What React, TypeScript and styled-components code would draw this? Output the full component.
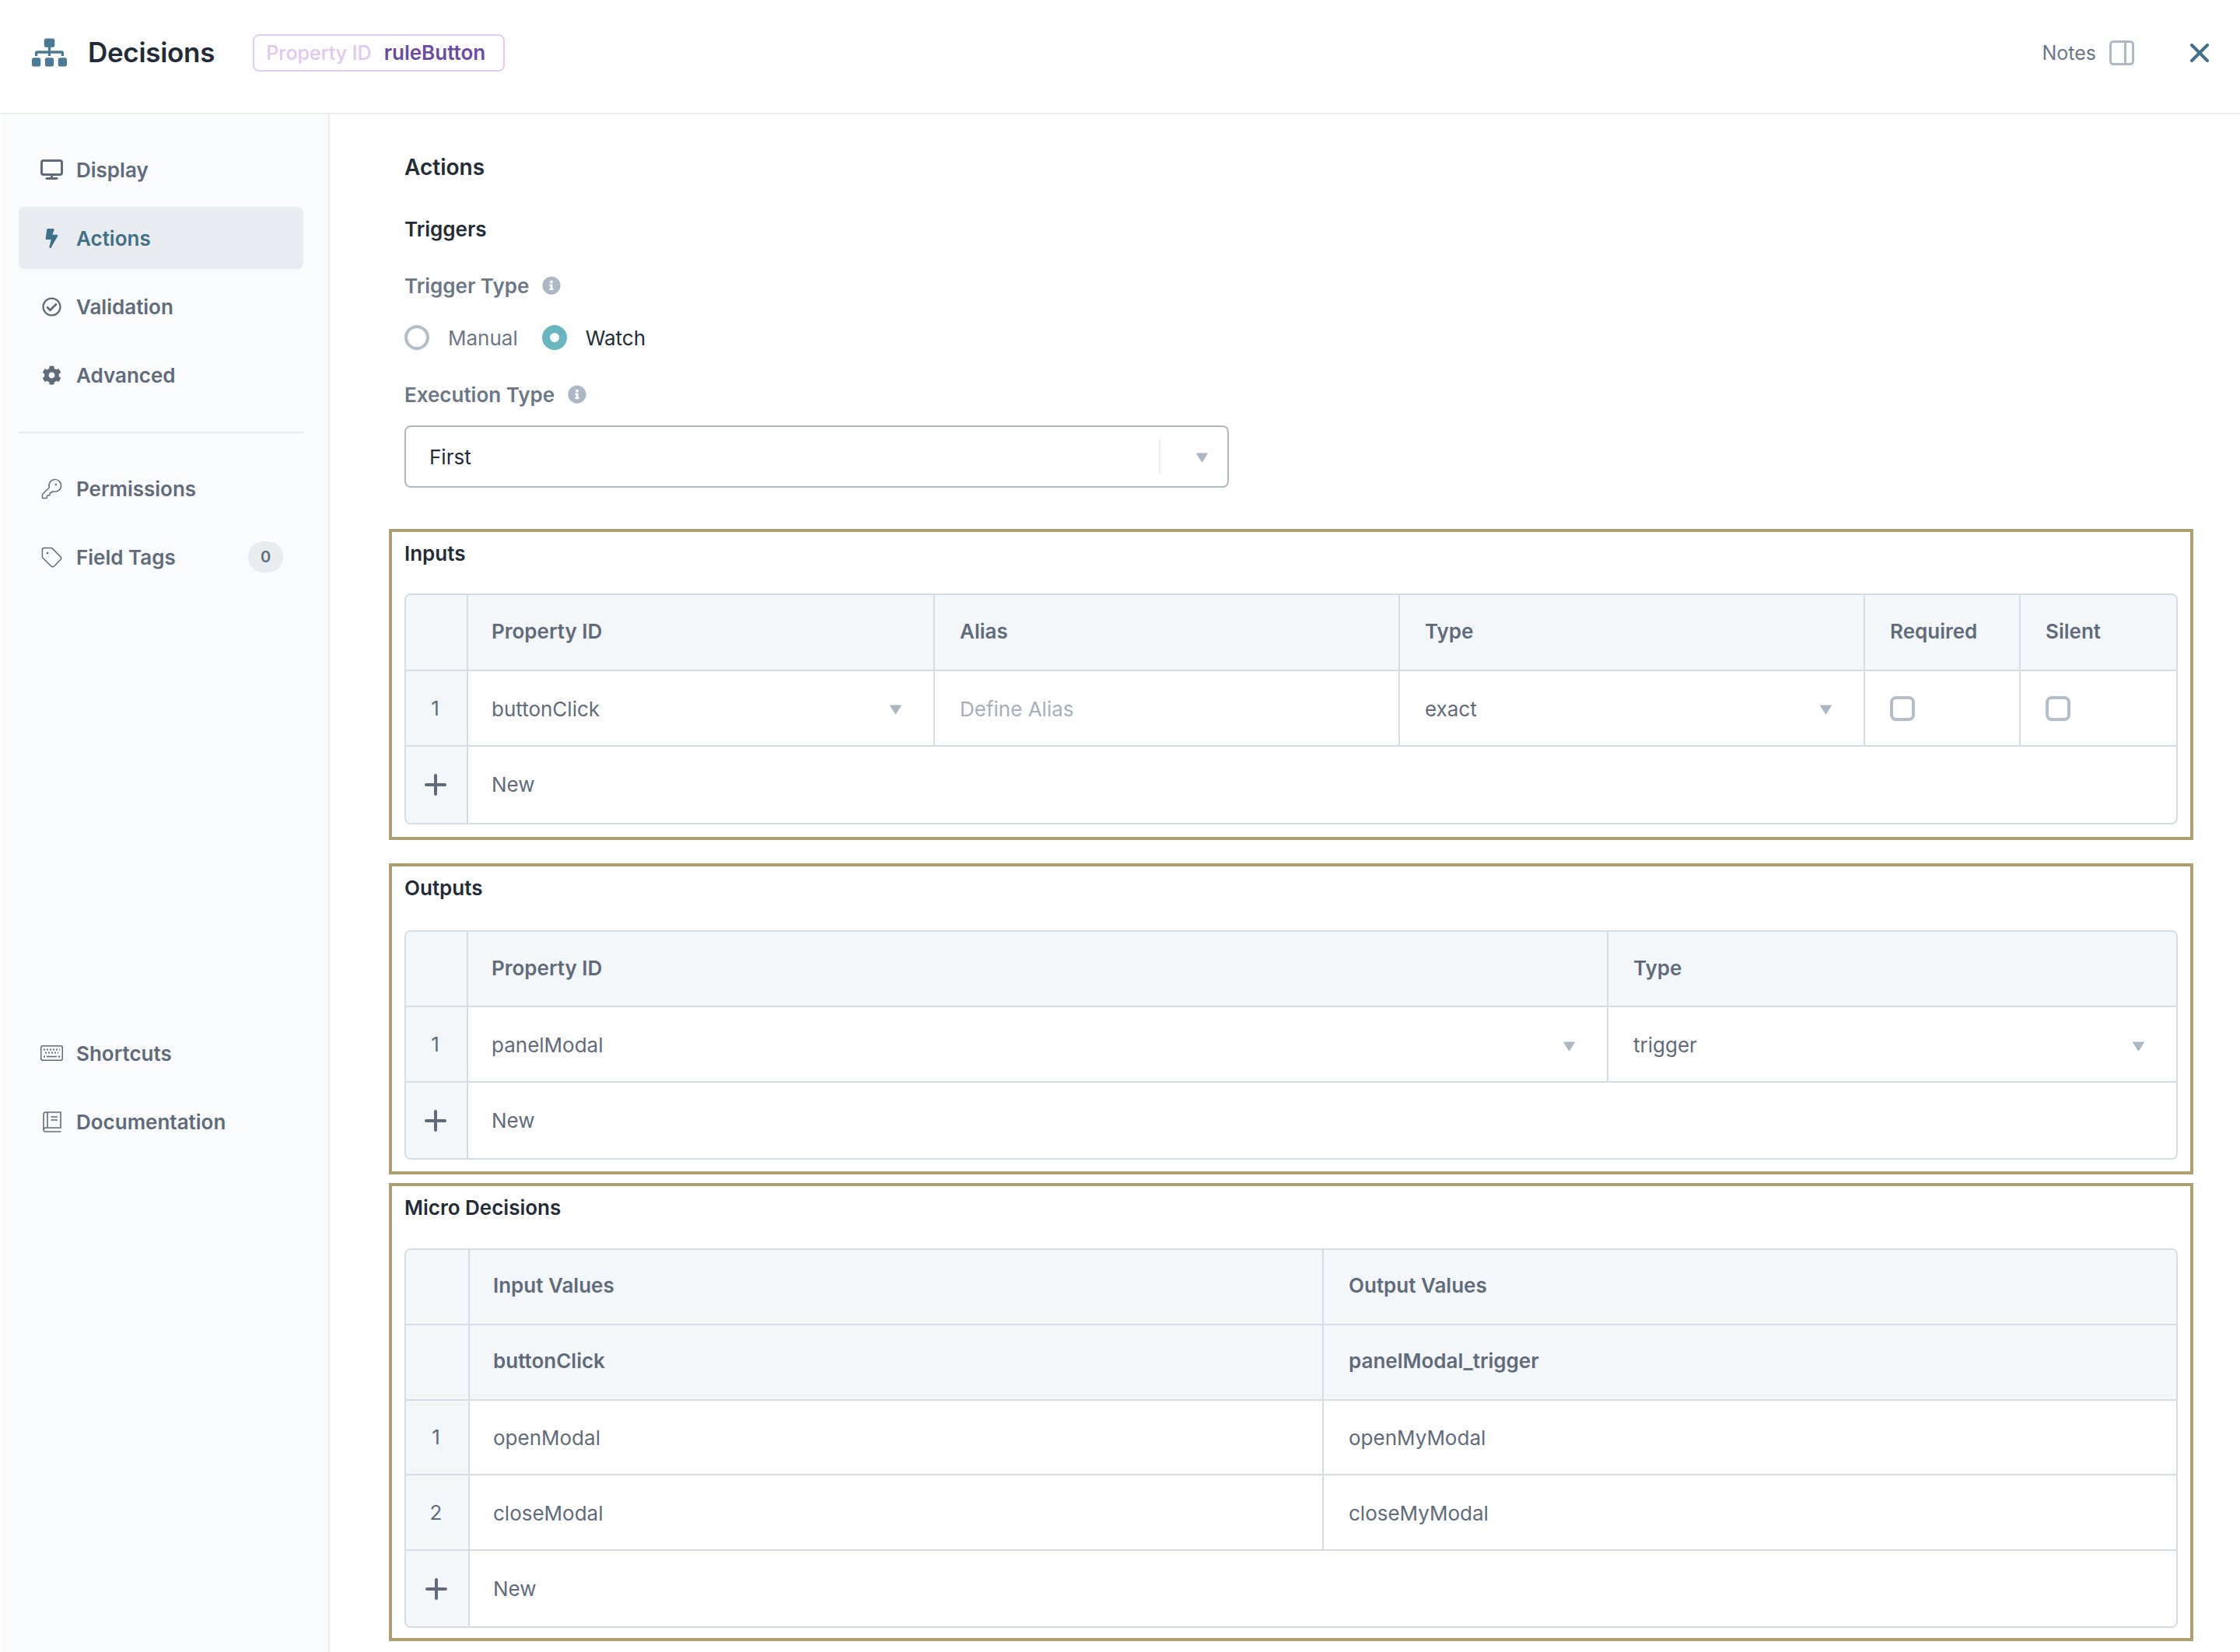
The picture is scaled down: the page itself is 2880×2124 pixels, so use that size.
import React from 'react';
import { KeyRound, Tag } from 'lucide-react';
import { FaBolt, FaCog, FaInfoCircle, FaRegCheckCircle, FaSitemap } from 'react-icons/fa';
import styled, { createGlobalStyle } from 'styled-components';

const GlobalStyle = createGlobalStyle`
  html, body {
    margin: 0;
    padding: 0;
    background: #fff;
  }
  body {
    font-family: Inter, "Liberation Sans", sans-serif;
    color: #222b38;
  }
  * { box-sizing: border-box; }
`;

const DesktopIcon = () => (
  <svg width="29" height="26" viewBox="0 0 29 26" fill="none" stroke="currentColor">
    <rect x="1.5" y="1.5" width="26" height="18" rx="2.5" strokeWidth="3" />
    <path d="M14.5 20v4" strokeWidth="3" />
    <path d="M8 24.5h13" strokeWidth="3" strokeLinecap="round" />
  </svg>
);

const KeyboardIcon = () => (
  <svg width="29" height="20" viewBox="0 0 29 20" fill="none" stroke="currentColor">
    <rect x="0.75" y="0.75" width="27.5" height="18.5" rx="2" strokeWidth="1.5" />
    <path d="M4 5.5h21M6 9.5h17M4 9.5h0" strokeWidth="2" strokeDasharray="2 2" />
    <path d="M8 14.5h13" strokeWidth="1.6" />
    <path d="M4 14.5h2M23 14.5h2" strokeWidth="2" />
  </svg>
);

const BookIcon = () => (
  <svg width="24" height="27" viewBox="0 0 24 27" fill="none" stroke="currentColor" strokeWidth="1.6">
    <path d="M23 21H4a3 3 0 0 0-3 3v-20a3 3 0 0 1 3-3h19z" />
    <path d="M1 24a2.4 2.4 0 0 0 3 2h19.4" />
    <path d="M6 1v20" />
    <path d="M10.5 7h8.5M10.5 11h8.5" />
  </svg>
);

const Caret = () => (
  <CaretSvg width="17" height="13" viewBox="0 0 17 13">
    <path d="M1.5 1h14L8.5 12z" fill="#adb6c1" stroke="#adb6c1" strokeLinejoin="round" />
  </CaretSvg>
);

const Plus = () => (
  <svg width="28" height="28" viewBox="0 0 28 28" stroke="#5f6b7b" strokeWidth="4" strokeLinecap="round">
    <path d="M14 2v24M2 14h24" />
  </svg>
);

const App = () => (
  <Page>
    <GlobalStyle />
    <Header>
      <HeaderLeft>
        <LogoIcon><FaSitemap size={45} /></LogoIcon>
        <Title>Decisions</Title>
        <IdBadge>
          <IdLabel>Property ID</IdLabel>
          <IdValue>ruleButton</IdValue>
        </IdBadge>
      </HeaderLeft>
      <HeaderRight>
        <NotesText>Notes</NotesText>
        <svg width="32" height="32" viewBox="0 0 32 32" fill="none" stroke="#aeb9c5" strokeWidth="3">
          <rect x="1.5" y="1.5" width="29" height="29" rx="4" />
          <path d="M20.5 2v28" />
        </svg>
        <CloseButton>
          <svg width="24" height="24" viewBox="0 0 24 24" stroke="#40708a" strokeWidth="4" strokeLinecap="round">
            <path d="M2 2l20 20M22 2L2 22" />
          </svg>
        </CloseButton>
      </HeaderRight>
    </Header>

    <Body>
      <Sidebar>
        <NavItem><NavIcon><DesktopIcon /></NavIcon>Display</NavItem>
        <NavItem $active><NavIcon><FaBolt size={25} /></NavIcon>Actions</NavItem>
        <NavItem><NavIcon><FaRegCheckCircle size={25} /></NavIcon>Validation</NavItem>
        <NavItem><NavIcon><FaCog size={25} /></NavIcon>Advanced</NavItem>
        <Divider />
        <NavItem><NavIcon><KeyRound size={29} strokeWidth={1.2} /></NavIcon>Permissions</NavItem>
        <NavItem>
          <NavIcon><Tag size={29} strokeWidth={1.2} /></NavIcon>
          Field Tags
          <CountBadge>0</CountBadge>
        </NavItem>
        <BottomGroup>
          <NavItem><NavIcon><KeyboardIcon /></NavIcon>Shortcuts</NavItem>
          <NavItem><NavIcon><BookIcon /></NavIcon>Documentation</NavItem>
        </BottomGroup>
      </Sidebar>

      <Main>
        <SectionTitle>Actions</SectionTitle>
        <SubTitle>Triggers</SubTitle>
        <FieldLabel>
          Trigger Type
          <InfoIcon><FaInfoCircle size={24} /></InfoIcon>
        </FieldLabel>
        <RadioRow>
          <Radio />
          <RadioText>Manual</RadioText>
          <Radio $on />
          <RadioText $on>Watch</RadioText>
        </RadioRow>
        <FieldLabel $top={33}>
          Execution Type
          <InfoIcon><FaInfoCircle size={24} /></InfoIcon>
        </FieldLabel>
        <Select>
          <SelectValue>First</SelectValue>
          <SelectDivider />
          <Caret />
        </Select>

        <Boxed $top={53} $height={400}>
          <BoxLabel $gap={31}>Inputs</BoxLabel>
          <Table $cols="80px 600px 598px 598px 200px 1fr" $row={97.5}>
            <HeadCell />
            <HeadCell $first>Property ID</HeadCell>
            <HeadCell>Alias</HeadCell>
            <HeadCell>Type</HeadCell>
            <HeadCell>Required</HeadCell>
            <HeadCell $end>Silent</HeadCell>

            <IndexCell>1</IndexCell>
            <Cell $first>buttonClick<Caret /></Cell>
            <Cell $muted>Define Alias</Cell>
            <Cell>exact<Caret /></Cell>
            <Cell><Checkbox /></Cell>
            <Cell $end><Checkbox /></Cell>

            <IndexCell $last><Plus /></IndexCell>
            <NewCell>New</NewCell>
          </Table>
        </Boxed>

        <Boxed $top={30} $height={400}>
          <BoxLabel $gap={34}>Outputs</BoxLabel>
          <Table $cols="80px 1466px 1fr" $row={97}>
            <HeadCell />
            <HeadCell $first>Property ID</HeadCell>
            <HeadCell $end>Type</HeadCell>

            <IndexCell>1</IndexCell>
            <Cell $first>panelModal<Caret /></Cell>
            <Cell $end>trigger<Caret /></Cell>

            <IndexCell $last><Plus /></IndexCell>
            <NewCell>New</NewCell>
          </Table>
        </Boxed>

        <Boxed $top={11} $height={589}>
          <BoxLabel $gap={32}>Micro Decisions</BoxLabel>
          <Table $cols="82px 1098px 1fr" $row={96.8}>
            <HeadCell />
            <HeadCell $first>Input Values</HeadCell>
            <HeadCell $end>Output Values</HeadCell>

            <HeadCell />
            <HeadCell $first>buttonClick</HeadCell>
            <HeadCell $end>panelModal_trigger</HeadCell>

            <IndexCell>1</IndexCell>
            <Cell $first>openModal</Cell>
            <Cell $end>openMyModal</Cell>

            <IndexCell>2</IndexCell>
            <Cell $first>closeModal</Cell>
            <Cell $end>closeMyModal</Cell>

            <IndexCell $last><Plus /></IndexCell>
            <NewCell>New</NewCell>
          </Table>
        </Boxed>
      </Main>
    </Body>
  </Page>
);

const Page = styled.div`
  width: 2880px;
  height: 2124px;
  overflow: hidden;
  display: flex;
  flex-direction: column;
  background: #fff;
`;

const Header = styled.header`
  height: 147px;
  flex: none;
  display: flex;
  align-items: center;
  justify-content: space-between;
  padding: 0 40px 10px 41px;
  border-bottom: 2px solid #eaeef0;
`;

const HeaderLeft = styled.div`
  display: flex;
  align-items: center;
`;

const LogoIcon = styled.span`
  display: flex;
  color: #4a7a96;
  margin-right: 27px;
`;

const Title = styled.h1`
  margin: -2px 49px 0 0;
  font-size: 35px;
  line-height: 44px;
  font-weight: 600;
  letter-spacing: -0.3px;
  color: #222b38;
`;

const IdBadge = styled.div`
  height: 48px;
  width: 324px;
  display: flex;
  align-items: center;
  padding: 0 15px;
  border: 2px solid #e2cdee;
  border-radius: 8px;
  font-size: 26px;
  font-weight: 600;
`;

const IdLabel = styled.span`
  color: #e0c8ee;
  font-size: 25px;
  font-weight: 500;
  margin-right: 16px;
  white-space: nowrap;
`;

const IdValue = styled.span`
  color: #6b4aa6;
`;

const HeaderRight = styled.div`
  display: flex;
  align-items: center;
`;

const NotesText = styled.span`
  font-size: 25px;
  color: #6b7787;
  margin-right: 17px;
`;

const CloseButton = styled.span`
  display: flex;
  margin-left: 72px;
`;

const CaretSvg = styled.svg`
  flex: none;
  margin-left: auto;
  margin-top: 3px;
`;

const Body = styled.div`
  flex: 1;
  display: flex;
  min-height: 0;
`;

const Sidebar = styled.nav`
  flex: none;
  width: 421px;
  margin-left: 3px;
  padding: 31px 32px 0 21px;
  background: #f9fbfc;
  border-right: 2px solid #e8ecf1;
  display: flex;
  flex-direction: column;
  gap: 8px;
`;

const NavItem = styled.div<{ $active?: boolean }>`
  height: 80px;
  flex: none;
  display: flex;
  align-items: center;
  padding: 0 24px 0 28px;
  border-radius: 8px;
  font-size: 26px;
  font-weight: 600;
  color: ${(p) => (p.$active ? '#3f7088' : '#5f6b7b')};
  background: ${(p) => (p.$active ? '#e8ecf0' : 'transparent')};
`;

const NavIcon = styled.span`
  width: 29px;
  margin-right: 17px;
  display: flex;
  align-items: center;
  justify-content: center;
  flex: none;
`;

const CountBadge = styled.span`
  margin-left: auto;
  margin-right: 2px;
  width: 45px;
  height: 40px;
  border-radius: 20px;
  background: #e8ecf0;
  display: flex;
  align-items: center;
  justify-content: center;
  font-size: 20px;
  font-weight: 600;
`;

const Divider = styled.div`
  height: 2px;
  background: #e8ecf0;
  margin: 25px 0 23px;
  flex: none;
`;

const BottomGroup = styled.div`
  margin-top: 550px;
  display: flex;
  flex-direction: column;
  gap: 8px;
`;

const Main = styled.main`
  flex: 1;
  min-width: 0;
  padding: 48px 80px 0 96px;
  display: flex;
  flex-direction: column;
`;

const SectionTitle = styled.h2`
  margin: 0;
  font-size: 28px;
  line-height: 40px;
  font-weight: 600;
  color: #222b38;
`;

const SubTitle = styled.h3`
  margin: 40px 0 0;
  font-size: 26px;
  line-height: 40px;
  font-weight: 600;
  color: #222b38;
`;

const FieldLabel = styled.div<{ $top?: number }>`
  margin-top: ${(p) => p.$top ?? 32}px;
  height: 40px;
  display: flex;
  align-items: center;
  font-size: 26px;
  font-weight: 600;
  color: #6b7787;
`;

const InfoIcon = styled.span`
  display: flex;
  margin-left: 17px;
  color: #adb8c6;
`;

const RadioRow = styled.div`
  margin-top: 27px;
  height: 40px;
  display: flex;
  align-items: center;
`;

const Radio = styled.span<{ $on?: boolean }>`
  width: 32px;
  height: 32px;
  border-radius: 50%;
  flex: none;
  border: ${(p) => (p.$on ? '10px solid #68b6bf' : '4px solid #b5bfc9')};
  background: #fff;
`;

const RadioText = styled.span<{ $on?: boolean }>`
  font-size: 26px;
  color: ${(p) => (p.$on ? '#222b38' : '#6b7787')};
  margin-left: 24px;
  margin-right: 31px;
`;

const Select = styled.div`
  margin-top: 20px;
  width: 1060px;
  height: 80px;
  flex: none;
  display: flex;
  align-items: center;
  padding: 0 24px 0 30px;
  border: 2px solid #afb9c1;
  border-radius: 8px;
  font-size: 26px;
  color: #222b38;
`;

const SelectValue = styled.span`
  flex: 1;
`;

const SelectDivider = styled.span`
  width: 2px;
  height: 44px;
  background: #e8ecf0;
  margin-right: 45px;
`;

const Boxed = styled.section<{ $top: number; $height: number }>`
  margin: ${(p) => p.$top}px -20px 0;
  height: ${(p) => p.$height}px;
  flex: none;
  padding: 8px 16px 0;
  border: 4px solid #ad9f6f;
`;

const BoxLabel = styled.div<{ $gap: number }>`
  font-size: 26px;
  line-height: 40px;
  font-weight: 600;
  color: #222b38;
  margin-bottom: ${(p) => p.$gap}px;
`;

const Table = styled.div<{ $cols: string; $row: number }>`
  display: grid;
  grid-template-columns: ${(p) => p.$cols};
  grid-auto-rows: ${(p) => p.$row}px;
  border: 2px solid #d5dce3;
  border-radius: 8px;
  overflow: hidden;
  font-size: 26px;
  color: #5f6b7b;
`;

const Cell = styled.div<{ $end?: boolean; $muted?: boolean; $first?: boolean }>`
  display: flex;
  align-items: center;
  padding: 2px 40px 0 ${(p) => (p.$first ? 30 : 32)}px;
  border-bottom: 2px solid #d5dce3;
  border-right: ${(p) => (p.$end ? 'none' : '2px solid #d5dce3')};
  color: ${(p) => (p.$muted ? '#a6b0bc' : '#5f6b7b')};
`;

const HeadCell = styled(Cell)`
  padding-top: 0;
  padding-bottom: 3px;
  background: #f4f7fa;
  font-weight: 600;
  color: #5f6b7b;
`;

const IndexCell = styled.div<{ $last?: boolean }>`
  display: flex;
  align-items: center;
  justify-content: center;
  padding-right: 3px;
  background: #f4f7fa;
  border-right: 2px solid #d5dce3;
  border-bottom: ${(p) => (p.$last ? 'none' : '2px solid #d5dce3')};
`;

const NewCell = styled.div`
  grid-column: 2 / -1;
  display: flex;
  align-items: center;
  padding: 0 30px;
`;

const Checkbox = styled.span`
  width: 32px;
  height: 32px;
  border: 4px solid #b5bfc9;
  border-radius: 8px;
  background: #fff;
`;

export default App;
